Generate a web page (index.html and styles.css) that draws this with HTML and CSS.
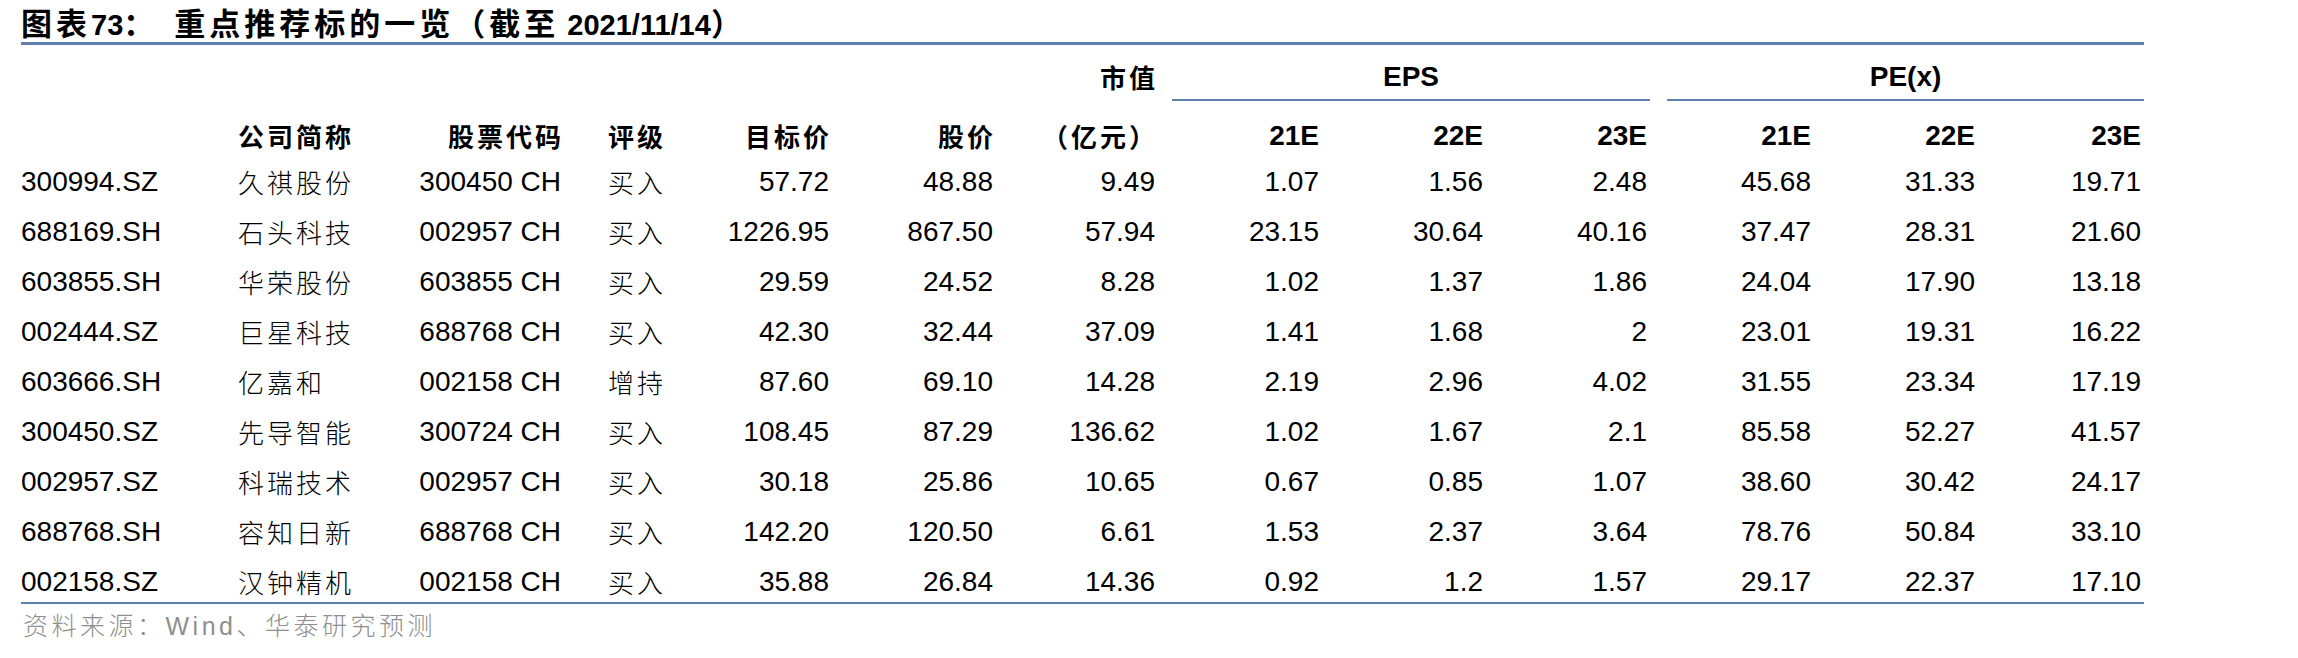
FILE: index.html
```html
<!DOCTYPE html>
<html lang="zh-CN">
<head>
<meta charset="utf-8">
<title>重点推荐标的一览</title>
<link rel="stylesheet" href="styles.css">
</head>
<body>
<div class="sheet">
  <div class="title"><span class="zh">图表</span>73<span class="zh">：</span><span class="zh gap">重点推荐标的一览（截至</span> 2021/11/14<span class="zh">）</span></div>

  <div class="row head1">
    <div class="cell span6"></div>
    <div class="cell r zh b">市值</div>
    <div class="cell group eps">EPS</div>
    <div class="cell group pe">PE(x)</div>
  </div>

  <div class="row head2">
    <div class="cell"></div>
    <div class="cell l2 zh b">公司简称</div>
    <div class="cell r zh b">股票代码</div>
    <div class="cell l4 zh b">评级</div>
    <div class="cell r zh b">目标价</div>
    <div class="cell r zh b">股价</div>
    <div class="cell r zh b paren">（亿元）</div>
    <div class="cell r b">21E</div>
    <div class="cell r b">22E</div>
    <div class="cell r b">23E</div>
    <div class="cell r b">21E</div>
    <div class="cell r b">22E</div>
    <div class="cell r b">23E</div>
  </div>

  <div class="body">
    <div class="row data"><div class="cell">300994.SZ</div><div class="cell l2 zh">久祺股份</div><div class="cell r">300450 CH</div><div class="cell l4 zh">买入</div><div class="cell r">57.72</div><div class="cell r">48.88</div><div class="cell r">9.49</div><div class="cell r">1.07</div><div class="cell r">1.56</div><div class="cell r">2.48</div><div class="cell r">45.68</div><div class="cell r">31.33</div><div class="cell r">19.71</div></div>
    <div class="row data"><div class="cell">688169.SH</div><div class="cell l2 zh">石头科技</div><div class="cell r">002957 CH</div><div class="cell l4 zh">买入</div><div class="cell r">1226.95</div><div class="cell r">867.50</div><div class="cell r">57.94</div><div class="cell r">23.15</div><div class="cell r">30.64</div><div class="cell r">40.16</div><div class="cell r">37.47</div><div class="cell r">28.31</div><div class="cell r">21.60</div></div>
    <div class="row data"><div class="cell">603855.SH</div><div class="cell l2 zh">华荣股份</div><div class="cell r">603855 CH</div><div class="cell l4 zh">买入</div><div class="cell r">29.59</div><div class="cell r">24.52</div><div class="cell r">8.28</div><div class="cell r">1.02</div><div class="cell r">1.37</div><div class="cell r">1.86</div><div class="cell r">24.04</div><div class="cell r">17.90</div><div class="cell r">13.18</div></div>
    <div class="row data"><div class="cell">002444.SZ</div><div class="cell l2 zh">巨星科技</div><div class="cell r">688768 CH</div><div class="cell l4 zh">买入</div><div class="cell r">42.30</div><div class="cell r">32.44</div><div class="cell r">37.09</div><div class="cell r">1.41</div><div class="cell r">1.68</div><div class="cell r">2</div><div class="cell r">23.01</div><div class="cell r">19.31</div><div class="cell r">16.22</div></div>
    <div class="row data"><div class="cell">603666.SH</div><div class="cell l2 zh">亿嘉和</div><div class="cell r">002158 CH</div><div class="cell l4 zh">增持</div><div class="cell r">87.60</div><div class="cell r">69.10</div><div class="cell r">14.28</div><div class="cell r">2.19</div><div class="cell r">2.96</div><div class="cell r">4.02</div><div class="cell r">31.55</div><div class="cell r">23.34</div><div class="cell r">17.19</div></div>
    <div class="row data"><div class="cell">300450.SZ</div><div class="cell l2 zh">先导智能</div><div class="cell r">300724 CH</div><div class="cell l4 zh">买入</div><div class="cell r">108.45</div><div class="cell r">87.29</div><div class="cell r">136.62</div><div class="cell r">1.02</div><div class="cell r">1.67</div><div class="cell r">2.1</div><div class="cell r">85.58</div><div class="cell r">52.27</div><div class="cell r">41.57</div></div>
    <div class="row data"><div class="cell">002957.SZ</div><div class="cell l2 zh">科瑞技术</div><div class="cell r">002957 CH</div><div class="cell l4 zh">买入</div><div class="cell r">30.18</div><div class="cell r">25.86</div><div class="cell r">10.65</div><div class="cell r">0.67</div><div class="cell r">0.85</div><div class="cell r">1.07</div><div class="cell r">38.60</div><div class="cell r">30.42</div><div class="cell r">24.17</div></div>
    <div class="row data"><div class="cell">688768.SH</div><div class="cell l2 zh">容知日新</div><div class="cell r">688768 CH</div><div class="cell l4 zh">买入</div><div class="cell r">142.20</div><div class="cell r">120.50</div><div class="cell r">6.61</div><div class="cell r">1.53</div><div class="cell r">2.37</div><div class="cell r">3.64</div><div class="cell r">78.76</div><div class="cell r">50.84</div><div class="cell r">33.10</div></div>
    <div class="row data"><div class="cell">002158.SZ</div><div class="cell l2 zh">汉钟精机</div><div class="cell r">002158 CH</div><div class="cell l4 zh">买入</div><div class="cell r">35.88</div><div class="cell r">26.84</div><div class="cell r">14.36</div><div class="cell r">0.92</div><div class="cell r">1.2</div><div class="cell r">1.57</div><div class="cell r">29.17</div><div class="cell r">22.37</div><div class="cell r">17.10</div></div>
  </div>

  <div class="source"><span class="zh">资料来源：</span>Wind<span class="zh">、华泰研究预测</span></div>
</div>
</body>
</html>
```

FILE: styles.css
```css
html, body {
  margin: 0;
  padding: 0;
  background: #ffffff;
}

body {
  font-family: "Liberation Sans", Arial, "Noto Sans CJK SC", sans-serif;
  color: #000000;
}

.sheet {
  margin-left: 21px;
  width: 2123px;
}

.zh {
  font-family: "Noto Sans CJK SC", "Liberation Sans", sans-serif;
}

/* title */
.title {
  box-sizing: border-box;
  height: 45px;
  padding-top: 5px;
  font-size: 29px;
  line-height: 34px;
  font-weight: bold;
  white-space: nowrap;
  border-bottom: 3px solid #5f7fae;
}

.title .zh {
  font-size: 31px;
  letter-spacing: 4px;
}

.title .gap {
  margin-left: 16px;
}

/* grid rows */
.row {
  display: grid;
  grid-template-columns: 215px 164px 164px 104px 164px 164px 162px 164px 164px 164px 164px 164px 166px;
  box-sizing: border-box;
  font-size: 28px;
  line-height: 32px;
  white-space: nowrap;
}

.cell {
  box-sizing: border-box;
}

.cell.r {
  text-align: right;
  padding-right: 3px;
}

.cell.l2 {
  padding-left: 2px;
}

.cell.l4 {
  padding-left: 44px;
}

.cell.zh {
  font-size: 26px;
  letter-spacing: 3px;
}

.cell.r.zh {
  padding-right: 0;
}

.b {
  font-weight: bold;
}

.head1 {
  height: 56px;
}

.head1 .cell {
  padding-top: 16px;
}

.span6 {
  grid-column: 1 / 7;
}

.group {
  font-weight: bold;
  text-align: center;
  border-bottom: 2px solid #5f7fae;
}

.eps {
  grid-column: 8 / 11;
  margin-left: 14px;
}

.pe {
  grid-column: 11 / 14;
  margin-left: 17px;
}

.head2 {
  height: 51px;
}

.head2 .cell {
  padding-top: 19px;
}

.data {
  height: 50px;
}

.data .cell {
  padding-top: 14px;
}

.data .cell.zh {
  font-weight: 300;
}

.body {
  border-bottom: 2px solid #5f7fae;
}

/* source note */
.source {
  padding-top: 5px;
  padding-left: 2px;
  font-size: 25px;
  line-height: 30px;
  color: #8f8f8f;
  letter-spacing: 3.5px;
  white-space: nowrap;
}

.source .zh {
  font-size: 25px;
  font-weight: 300;
}
```
